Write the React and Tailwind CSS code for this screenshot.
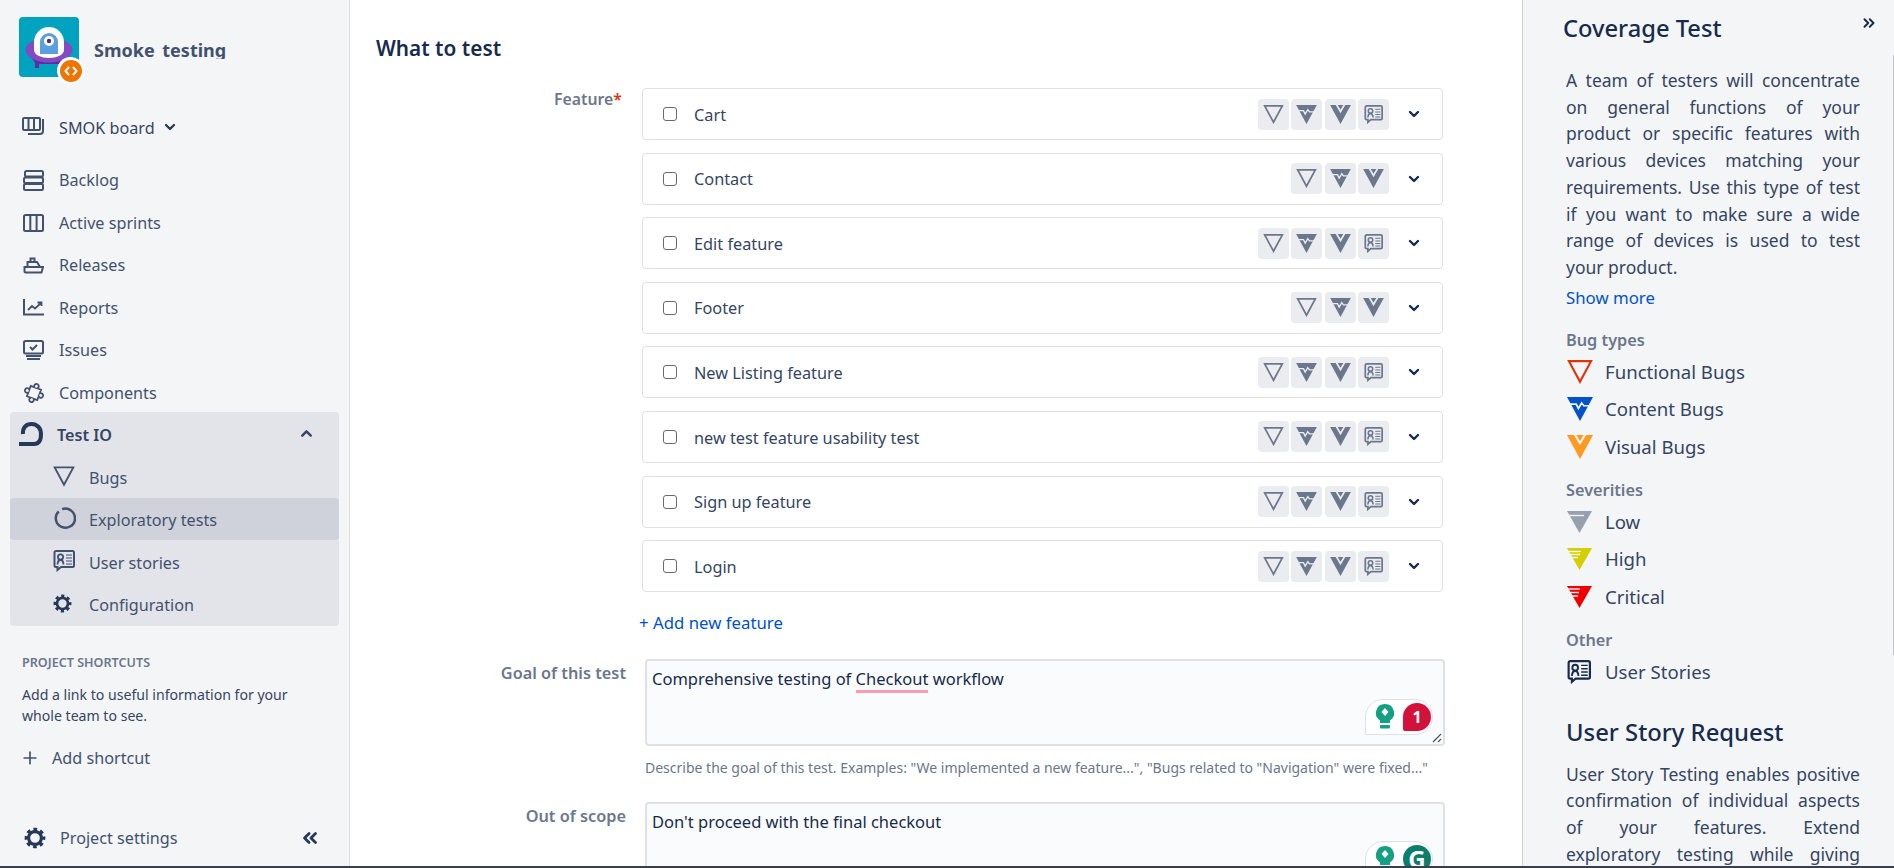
import { ChevronDown, ChevronUp, ChevronsLeft, ChevronsRight, Plus } from 'lucide-react';

const features = [
  { name: 'Cart', story: true },
  { name: 'Contact', story: false },
  { name: 'Edit feature', story: true },
  { name: 'Footer', story: false },
  { name: 'New Listing feature', story: true },
  { name: 'new test feature usability test', story: true },
  { name: 'Sign up feature', story: true },
  { name: 'Login', story: true },
];

function Outline({ color, w = 24, h = 22 }) {
  return (
    <svg width={w} height={h} viewBox="0 0 24 22" fill="none">
      <path d="M1.8 1H22.2L12 20Z" stroke={color} strokeWidth="2" strokeLinejoin="miter" />
    </svg>
  );
}

function ContentBug({ color, bg, w = 24, h = 22 }) {
  return (
    <svg width={w} height={h} viewBox="0 0 24 22">
      <path d="M0 0H24L12 22Z" fill={color} />
      <path d="M2 6.5H8.5L10.5 10.5L13.5 5.5L15.5 8H22" fill="none" stroke={bg} strokeWidth="1.6" />
    </svg>
  );
}

function VisualBug({ color, bg, w = 24, h = 22 }) {
  return (
    <svg width={w} height={h} viewBox="0 0 24 22">
      <path d="M0 0H24L12 22Z" fill={color} />
      <path d="M7 -1L12 7.5L17 -1" fill="none" stroke={bg} strokeWidth="2" />
    </svg>
  );
}

function Severity({ color, lines }) {
  return (
    <svg width="25" height="22" viewBox="0 0 25 22">
      <path d="M0 0H25L12.5 22Z" fill={color} />
      {lines.map(([y, x1, x2]) => (
        <path key={y} d={`M${x1} ${y}H${x2}`} stroke="#f4f5f7" strokeWidth="1.4" />
      ))}
    </svg>
  );
}

function StoryIcon({ color, size = 22 }) {
  return (
    <svg width={size} height={size} viewBox="0 0 22 22" fill="none">
      <path d="M3 1H19.5A1.5 1.5 0 0 1 21 2.5V15.5A1.5 1.5 0 0 1 19.5 17H8L4.5 20V17H3A1.5 1.5 0 0 1 1.5 15.5V2.5A1.5 1.5 0 0 1 3 1Z" stroke={color} strokeWidth="2" />
      <circle cx="7.5" cy="7" r="2.6" stroke={color} strokeWidth="1.8" />
      <path d="M4.5 14.5C4.7 11.5 6 10 7.5 10S10.3 11.5 10.5 14.5" stroke={color} strokeWidth="1.8" />
      <path d="M13 5H19M13 8H19M13 11H19M13 14H19" stroke={color} strokeWidth="1.2" />
    </svg>
  );
}

function Gear({ size = 22, color = '#253858' }) {
  return (
    <svg width={size} height={size} viewBox="0 0 24 24" fill="none">
      <circle cx="12" cy="12" r="7" stroke={color} strokeWidth="3.4" />
      <circle cx="12" cy="12" r="9.5" stroke={color} strokeWidth="3.6" strokeDasharray="4 3.46" strokeDashoffset="2" />
    </svg>
  );
}

function Logo() {
  return (
    <div className="relative h-[60px] w-[60px] shrink-0">
      <svg width="60" height="60" viewBox="0 0 60 60">
        <rect width="60" height="60" rx="4" fill="#00a3bf" />
        <rect x="16" y="44" width="4" height="7" fill="#5e2ca5" />
        <path d="M12 40H48L44 47H17Z" fill="#5e2ca5" />
        <ellipse cx="30" cy="33" rx="23.5" ry="12.5" fill="#8549c2" />
        <path d="M15 25A15 15 0 0 1 45 25V33A15 8 0 0 1 15 33Z" fill="#fff" />
        <path d="M21 25A9 9 0 0 1 39 25V37H21Z" fill="#5a9fe0" />
        <circle cx="30" cy="24" r="5" fill="#fff" />
        <circle cx="30" cy="24" r="2.2" fill="#403294" />
      </svg>
      <span className="absolute left-[38px] top-[40px] flex h-[27px] w-[27px] items-center justify-center rounded-full bg-white">
        <span className="flex h-[22px] w-[22px] items-center justify-center rounded-full bg-[#f07400]">
          <svg width="14" height="10" viewBox="0 0 14 10" fill="none" stroke="#fff" strokeWidth="2">
            <path d="M5 1L1.5 5L5 9M9 1L12.5 5L9 9" />
          </svg>
        </span>
      </span>
    </div>
  );
}

const navStroke = { fill: 'none', stroke: '#42526e', strokeWidth: 2 };

const navIcons = {
  board: (
    <svg width="23" height="20" viewBox="0 0 23 20" {...navStroke}>
      <rect x="1" y="1" width="17" height="12" rx="1" />
      <path d="M6.5 1V13M12 1V13M21 2V14A3 3 0 0 1 18 17H6" />
    </svg>
  ),
  backlog: (
    <svg width="21" height="21" viewBox="0 0 21 21" {...navStroke}>
      <rect x="2" y="1" width="18" height="5.5" rx="1.5" />
      <rect x="1" y="7.5" width="19" height="5.5" rx="1.5" />
      <rect x="1" y="14" width="19" height="6" rx="1.5" />
    </svg>
  ),
  sprints: (
    <svg width="21" height="18" viewBox="0 0 21 18" {...navStroke}>
      <rect x="1" y="1" width="19" height="16" rx="1.5" />
      <path d="M7.3 1V17M13.6 1V17" />
    </svg>
  ),
  releases: (
    <svg width="21" height="17" viewBox="0 0 21 17" {...navStroke}>
      <path d="M1.5 10H20L18.5 15.5H2.5A1 1 0 0 1 1.5 14.5Z" />
      <path d="M4.5 10V5H14L17 10M7.5 5V1.5H11.5V5" />
    </svg>
  ),
  reports: (
    <svg width="21" height="17" viewBox="0 0 21 17" {...navStroke}>
      <path d="M1 0V15.5H21" />
      <path d="M5 11L9 7L12 9.5L18 4M14.5 3.5H18.5V7" strokeWidth="1.8" />
    </svg>
  ),
  issues: (
    <svg width="21" height="21" viewBox="0 0 21 21" {...navStroke}>
      <rect x="1" y="1" width="19" height="12.5" rx="1.5" />
      <path d="M7 7L9.5 9.5L14 5M3 16H18M4 19H17" />
    </svg>
  ),
  components: (
    <svg width="24" height="24" viewBox="0 0 24 24" {...navStroke} strokeWidth="1.8" className="ml-[-1px] rotate-[20deg]">
      <path d="M6.5 6.5H10.5A2.3 2.3 0 1 1 13.5 6.5H17.5V10.5A2.3 2.3 0 1 1 17.5 13.5V17.5H13.5A2.3 2.3 0 1 1 10.5 17.5H6.5V13.5A2.3 2.3 0 1 1 6.5 10.5Z" />
    </svg>
  ),
};

function NavRow({ icon, label }) {
  return (
    <div className="flex h-[42.5px] items-center pl-[23px] text-[#42526e]">
      <span className="flex w-[36px] shrink-0 items-center">{navIcons[icon]}</span>
      <span className="pt-[0.5px]">{label}</span>
    </div>
  );
}

function SubRow({ icon, label, active }) {
  return (
    <div className={`flex h-[42.5px] items-center rounded-[4px] pl-[43px] text-[#42526e] ${active ? 'bg-[#d0d2db]' : ''}`}>
      <span className="flex w-[36px] shrink-0 items-center">{icon}</span>
      <span className="pt-[3px]">{label}</span>
    </div>
  );
}

function Sidebar() {
  return (
    <aside className="flex h-full w-[350px] shrink-0 flex-col border-r border-[#dcdee3] bg-[#f4f5f7] text-[16.2px]">
      <div className="flex items-start pl-[19px] pt-[17px]">
        <Logo />
        <div className="ml-[15px] mt-[20px] h-[22px] overflow-hidden text-[18px] font-bold leading-[26px] text-[#42526e] [word-spacing:3px]">
          Smoke testing
        </div>
      </div>
      <div className="mt-[30px] flex h-[40px] items-center pl-[22px] text-[#344563]">
        <span className="flex w-[37px] shrink-0 items-center">{navIcons.board}</span>
        <span className="pt-[1.5px]">SMOK board</span>
        <ChevronDown size={16} strokeWidth={3.4} className="ml-[7px]" color="#253858" />
      </div>
      <div className="mt-[12px]">
        <NavRow icon="backlog" label="Backlog" />
        <NavRow icon="sprints" label="Active sprints" />
        <NavRow icon="releases" label="Releases" />
        <NavRow icon="reports" label="Reports" />
        <NavRow icon="issues" label="Issues" />
        <NavRow icon="components" label="Components" />
      </div>
      <div className="mx-[10px] mt-[-2px] h-[214px] rounded-[4px] bg-[#e3e4e9]">
        <div className="flex h-[43px] items-center pl-[9px] pr-[24px] font-semibold text-[#344563]">
          <svg width="24" height="24" viewBox="0 0 24 24" fill="none" stroke="#253858" strokeWidth="4" className="mr-[14px]">
            <path d="M4 12C3.5 5.5 7 2 12.5 2C18 2 22 6 22 12C22 18 20 22 15 22H0" />
          </svg>
          <span className="flex-1 pt-[4px]">Test IO</span>
          <ChevronUp size={17} strokeWidth={3.4} color="#344563" />
        </div>
        <SubRow icon={<Outline color="#42526e" w={22} h={21} />} label="Bugs" />
        <SubRow
          active
          icon={
            <svg width="23" height="23" viewBox="0 0 24 24" fill="none" stroke="#42526e" strokeWidth="2.6">
              <path d="M6 4.5A10 10 0 1 0 9.5 2.3" />
            </svg>
          }
          label="Exploratory tests"
        />
        <SubRow icon={<StoryIcon color="#42526e" />} label="User stories" />
        <SubRow icon={<Gear size={19} />} label="Configuration" />
      </div>
      <div className="mt-[28px] pl-[22px] text-[12.6px] font-semibold leading-[18px] text-[#6b778c]">PROJECT SHORTCUTS</div>
      <p className="mt-[12px] w-[300px] pl-[22px] text-[14.1px] leading-[21px] text-[#344563]">
        Add a link to useful information for your whole team to see.
      </p>
      <div className="mt-[21px] flex h-[22px] items-center pl-[20px] text-[#42526e]">
        <Plus size={20} strokeWidth={2} className="mr-[12px]" />
        <span>Add shortcut</span>
      </div>
      <div className="mt-auto mb-[16px] flex h-[24px] items-center pl-[24px] pr-[28px] text-[#42526e]">
        <Gear size={22} />
        <span className="ml-[14px] flex-1">Project settings</span>
        <ChevronsLeft size={22} strokeWidth={3} color="#253858" />
      </div>
    </aside>
  );
}

function Tile({ children }) {
  return <span className="flex h-[31px] w-[31px] items-center justify-center rounded-[4px] bg-[#ebecf0]">{children}</span>;
}

function FeatureRow({ name, story }) {
  return (
    <div className="flex h-[52px] items-center rounded-[4px] border border-[#dfe1e6] bg-white pl-[20px] pr-[20px]">
      <span className="h-[14px] w-[14px] rounded-[3px] border border-[#6b6b6b] bg-white" />
      <span className="ml-[17px] flex-1 pt-[1.5px] text-[#344563]">{name}</span>
      <div className="flex gap-[2.3px]">
        <Tile><Outline color="#6b778c" w={21} h={19} /></Tile>
        <Tile><ContentBug color="#6b778c" bg="#ebecf0" w={21} h={19} /></Tile>
        <Tile><VisualBug color="#6b778c" bg="#ebecf0" w={21} h={19} /></Tile>
        {story && <Tile><StoryIcon color="#6b778c" size={19} /></Tile>}
      </div>
      <ChevronDown size={16} strokeWidth={3.6} color="#172b4d" className="ml-[17px]" />
    </div>
  );
}

function Badge({ className, children }) {
  return (
    <div className={`absolute right-[10px] flex h-[36px] w-[68px] items-center rounded-[18px] rounded-bl-none border border-[#dfe1e6] bg-white pl-[8px] ${className}`}>
      <svg width="20" height="28" viewBox="0 0 20 28" className="mr-[8px] ml-[1px]">
        <path d="M10 1A9 9 0 0 1 15 17.5V20H5V17.5A9 9 0 0 1 10 1Z" fill="#15a085" />
        <path d="M10 5L13.5 9L10 13L6.5 9Z" fill="#fff" />
        <rect x="5" y="22" width="10" height="3.5" rx="1" fill="#15a085" />
      </svg>
      {children}
    </div>
  );
}

function Main() {
  return (
    <main className="h-full min-w-0 flex-1 overflow-hidden bg-white pl-[25px] text-[16.3px] text-[#172b4d]">
      <h2 className="ml-[1px] mt-[34px] h-[28px] text-[20.8px] font-semibold leading-[28px] text-[#172b4d]">What to test</h2>
      <div className="mt-[26px] flex">
        <div className="w-[247px] shrink-0 text-right text-[15.8px] font-semibold leading-[22px] text-[#6b778c]">
          Feature<span className="text-[#de350b]">*</span>
        </div>
        <div className="ml-[20px] flex w-[801px] flex-col gap-[12.6px]">
          {features.map((f) => (
            <FeatureRow key={f.name} {...f} />
          ))}
        </div>
      </div>
      <div className="mt-[19px] pl-[264px] text-[16.8px] leading-[24px] text-[#0052cc]">+ Add new feature</div>
      <div className="mt-[24px] flex">
        <div className="w-[251px] shrink-0 pt-[3px] text-right font-semibold leading-[22px] text-[#6b778c]">Goal of this test</div>
        <div className="ml-[19px] w-[800px]">
          <div className="relative h-[87px] rounded-[4px] border-2 border-[#dfe1e6] bg-[#fafbfc] px-[5px] pt-[7px] text-[16.5px] leading-[22px]">
            <span>Comprehensive testing of </span>
            <span className="border-b-[3px] border-[#ff9ab0]">Checkout</span>
            <span> workflow</span>
            <Badge className="top-[38px]">
              <span className="flex h-[28px] w-[28px] items-center justify-center rounded-[14px] rounded-bl-[2px] bg-[#d3123c] text-[16px] font-bold text-white">1</span>
            </Badge>
            <svg width="10" height="10" viewBox="0 0 10 10" className="absolute bottom-[1px] right-[1px]" stroke="#555" strokeWidth="1.2">
              <path d="M1 9L9 1M6 9L9 6" />
            </svg>
          </div>
          <div className="mt-[11px] h-[22px] text-[14px] leading-[22px] text-[#6b778c]">
            Describe the goal of this test. Examples: "We implemented a new feature...", "Bugs related to "Navigation" were fixed..."
          </div>
        </div>
      </div>
      <div className="mt-[23px] flex">
        <div className="w-[251px] shrink-0 pt-[3px] text-right font-semibold leading-[22px] text-[#6b778c]">Out of scope</div>
        <div className="ml-[19px] w-[800px]">
          <div className="relative h-[87px] rounded-[4px] border-2 border-[#dfe1e6] bg-[#fafbfc] px-[5px] pt-[7px] text-[16.5px] leading-[22px]">
            Don't proceed with the final checkout
            <Badge className="top-[37px]">
              <span className="flex h-[28px] w-[28px] items-center justify-center rounded-full bg-[#0d7d6c] text-[24px] font-bold leading-none text-white">G</span>
            </Badge>
          </div>
        </div>
      </div>
    </main>
  );
}

function Legend({ icon, label }) {
  return (
    <div className="flex h-[30px] items-center pl-[1px] text-[18.6px] text-[#344563]">
      <span className="flex w-[38px] shrink-0 items-center">{icon}</span>
      <span>{label}</span>
    </div>
  );
}

function Heading({ children }) {
  return <div className="h-[24px] text-[16.3px] font-semibold leading-[24px] text-[#6b778c]">{children}</div>;
}

function RightPanel() {
  const bg = '#f4f5f7';
  return (
    <aside className="relative h-full w-[372px] shrink-0 overflow-hidden border-l border-[#cfd1d6] bg-[#f4f5f7] pl-[43px] pr-[34px] text-[17.5px] text-[#344563]">
      <h3 className="ml-[-3px] mt-[12px] h-[32px] text-[23.7px] font-medium leading-[32px] text-[#172b4d]">Coverage Test</h3>
      <ChevronsRight size={18} strokeWidth={2.6} color="#172b4d" className="absolute right-[16px] top-[14px]" />
      <p className="mt-[23px] text-justify leading-[26.7px]">
        A team of testers will concentrate on general functions of your product or specific features with various devices matching your requirements. Use this type of test if you want to make sure a wide range of devices is used to test your product.
      </p>
      <div className="mt-[5px] h-[24px] text-[16.8px] leading-[24px] text-[#0052cc]">Show more</div>
      <div className="mt-[18px]"><Heading>Bug types</Heading></div>
      <div className="mt-[5px] flex flex-col gap-[7.5px]">
        <Legend icon={<Outline color="#de350b" w={26} h={24} />} label="Functional Bugs" />
        <Legend icon={<ContentBug color="#0052cc" bg={bg} w={26} h={24} />} label="Content Bugs" />
        <Legend icon={<VisualBug color="#ff991f" bg={bg} w={26} h={24} />} label="Visual Bugs" />
      </div>
      <div className="mt-[16px]"><Heading>Severities</Heading></div>
      <div className="mt-[5px] flex flex-col gap-[7.5px]">
        <Legend icon={<Severity color="#97a0af" lines={[[4.5, 2, 17]]} />} label="Low" />
        <Legend icon={<Severity color="#d6cf00" lines={[[3.5, 1, 14], [6.5, 3, 13], [9.5, 5, 11]]} />} label="High" />
        <Legend icon={<Severity color="#f00000" lines={[[3, 1, 13], [6.5, 3, 12], [10, 5, 11]]} />} label="Critical" />
      </div>
      <div className="mt-[16px]"><Heading>Other</Heading></div>
      <div className="mt-[5px]">
        <Legend icon={<StoryIcon color="#172b4d" size={24} />} label="User Stories" />
      </div>
      <h3 className="mt-[29px] h-[32px] text-[23.8px] font-medium leading-[32px] text-[#172b4d]">User Story Request</h3>
      <p className="mt-[13px] text-justify leading-[26.7px]">
        User Story Testing enables positive confirmation of individual aspects of your features. Extend exploratory testing while giving your testers more detailed guidance on what to verify.
      </p>
      <span className="absolute right-0 top-[55px] h-[600px] w-px bg-[#c1c7d0]" />
    </aside>
  );
}

export default function App() {
  return (
    <div className="flex h-[868px] w-full overflow-hidden border-b-2 border-[#3a3f4b] font-['Noto_Sans',sans-serif]">
      <Sidebar />
      <Main />
      <RightPanel />
    </div>
  );
}
